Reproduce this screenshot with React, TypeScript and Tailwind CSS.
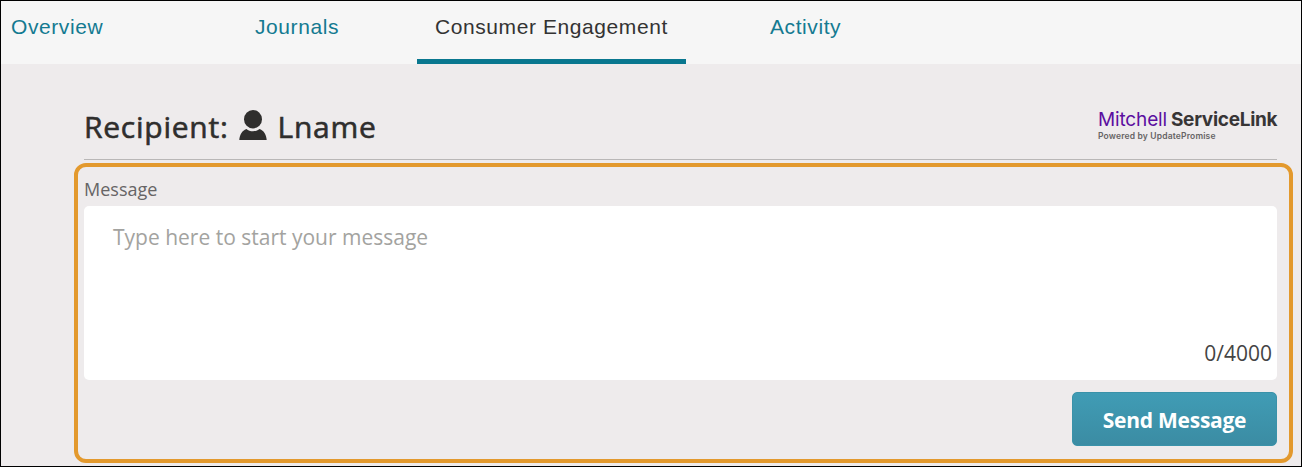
import { useState } from 'react'

const tabs = [
  { label: 'Overview', className: 'w-[226px] pl-[10px]' },
  { label: 'Journals', className: 'w-[190px] pl-[28px]' },
  { label: 'Consumer Engagement', className: 'w-[269px] pl-[18px]' },
  { label: 'Activity', className: 'w-[200px] pl-[84px]' },
]

function PersonIcon() {
  return (
    <svg width="28" height="31" viewBox="0 0 28 31" fill="#2f2e2d" aria-hidden="true">
      <ellipse cx="14" cy="9.2" rx="9" ry="9.2" />
      <path d="M0.3 30C0.6 25 3 20.6 7.4 19C9.2 20.4 11.4 21.3 14 21.3C16.6 21.3 18.8 20.4 20.6 19C25 20.6 27.4 25 27.7 30Z" />
    </svg>
  )
}

function ServiceLinkLogo() {
  return (
    <div className="w-[179px] whitespace-nowrap font-['Inter',sans-serif]">
      <div className="text-[19px] leading-[22px]">
        <span className="mr-[4px] tracking-[-0.15px] text-[#5b0fa0]">Mitchell</span>
        <span className="font-bold tracking-[-0.3px] text-[#373536]">ServiceLink</span>
      </div>
      <div className="text-[8.5px] leading-[11px] font-semibold tracking-[0.17px] text-[#666465]">
        Powered by UpdatePromise
      </div>
    </div>
  )
}

export default function App() {
  const [active, setActive] = useState('Consumer Engagement')
  const [message, setMessage] = useState('')

  return (
    <div className="flex h-[467px] w-[1302px] flex-col overflow-hidden border border-black bg-[#eeebec] font-['Open_Sans',sans-serif]">
      <nav className="flex h-[63px] shrink-0 bg-[#f6f6f6] font-['Liberation_Sans',Arial,sans-serif] text-[21px] tracking-[0.58px]">
        {tabs.map((tab) => (
          <button
            key={tab.label}
            onClick={() => setActive(tab.label)}
            className={`${tab.className} border-b-5 pb-[7px] text-left whitespace-nowrap ${
              tab.label === active ? 'border-[#09778f] text-[#333]' : 'border-transparent text-[#147a91]'
            }`}
          >
            {tab.label}
          </button>
        ))}
      </nav>

      <header className="mr-6 ml-[83px] flex h-24 shrink-0 justify-between border-b border-[#b9b7b7]">
        <h1 className="flex pt-[43px] text-[30px] leading-10 tracking-[0.75px] text-[#2f2e2d] [-webkit-text-stroke:0.6px_#2f2e2d]">
          Recipient:
          <span className="mt-[3px] mr-[11px] ml-[10px] [-webkit-text-stroke:0]">
            <PersonIcon />
          </span>
          Lname
        </h1>
        <div className="pt-[45px]">
          <ServiceLinkLogo />
        </div>
      </header>

      <section className="mt-[3px] mr-2 ml-[73px] flex h-[300px] shrink-0 flex-col rounded-xl border-4 border-[#e3992d] pr-3 pl-[6px]">
        <label htmlFor="message" className="h-[39px] pt-[10px] text-[18px] leading-6 text-[#666465]">
          Message
        </label>
        <div className="flex h-[174px] flex-col rounded-[5px] bg-white">
          <textarea
            id="message"
            value={message}
            maxLength={4000}
            onChange={(e) => setMessage(e.target.value)}
            placeholder="Type here to start your message"
            className="h-[132px] resize-none pt-4 pl-[29px] text-[21px] leading-[30px] outline-none placeholder:text-[#a3a3a0]"
          />
          <span className="pr-[5px] text-right text-[21px] leading-[30px] text-[#444]">{message.length}/4000</span>
        </div>
        <button className="mt-3 h-[54px] w-[205px] self-end rounded-[5px] border border-[#3a92a9] bg-linear-to-b from-[#409cb5] to-[#3b8ca3] pt-[3px] text-[21px] font-bold tracking-[-0.25px] text-white">
          Send Message
        </button>
      </section>
    </div>
  )
}
